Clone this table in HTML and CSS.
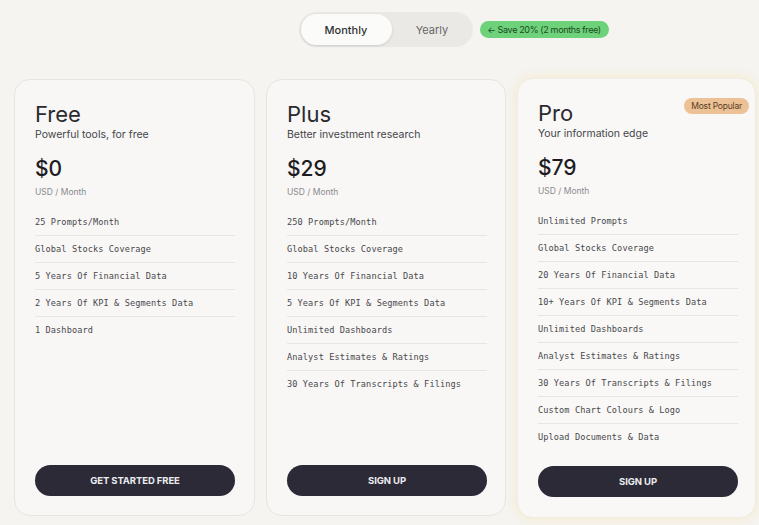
FILE: index.html
```html
<!DOCTYPE html>
<html>
<head>
<meta charset="utf-8">
<link rel="stylesheet" href="styles.css">
</head>
<body>
<div class="page">
  <div class="top">
    <div class="toggle-wrap">
      <div class="toggle">
        <span class="opt active">Monthly</span>
        <span class="opt">Yearly</span>
      </div>
      <span class="save">&#8592; Save 20% (2 months free)</span>
    </div>
  </div>
  <div class="cards">
    <div class="card">
      <h2 class="title">Free</h2>
      <p class="sub">Powerful tools, for free</p>
      <div class="price">$0</div>
      <div class="unit">USD / Month</div>
      <ul class="features">
        <li>25 Prompts/Month</li>
        <li>Global Stocks Coverage</li>
        <li>5 Years Of Financial Data</li>
        <li>2 Years Of KPI &amp; Segments Data</li>
        <li class="last">1 Dashboard</li>
      </ul>
      <button class="btn">GET STARTED FREE</button>
    </div>
    <div class="card">
      <h2 class="title">Plus</h2>
      <p class="sub">Better investment research</p>
      <div class="price">$29</div>
      <div class="unit">USD / Month</div>
      <ul class="features">
        <li>250 Prompts/Month</li>
        <li>Global Stocks Coverage</li>
        <li>10 Years Of Financial Data</li>
        <li>5 Years Of KPI &amp; Segments Data</li>
        <li>Unlimited Dashboards</li>
        <li>Analyst Estimates &amp; Ratings</li>
        <li class="last">30 Years Of Transcripts &amp; Filings</li>
      </ul>
      <button class="btn">SIGN UP</button>
    </div>
    <div class="card pro">
      <span class="popular">Most Popular</span>
      <h2 class="title">Pro</h2>
      <p class="sub">Your information edge</p>
      <div class="price">$79</div>
      <div class="unit">USD / Month</div>
      <ul class="features">
        <li>Unlimited Prompts</li>
        <li>Global Stocks Coverage</li>
        <li>20 Years Of Financial Data</li>
        <li>10+ Years Of KPI &amp; Segments Data</li>
        <li>Unlimited Dashboards</li>
        <li>Analyst Estimates &amp; Ratings</li>
        <li>30 Years Of Transcripts &amp; Filings</li>
        <li>Custom Chart Colours &amp; Logo</li>
        <li class="last">Upload Documents &amp; Data</li>
      </ul>
      <button class="btn">SIGN UP</button>
    </div>
  </div>
</div>
</body>
</html>
```
FILE: styles.css
```css
* { box-sizing: border-box; }
html, body { margin: 0; padding: 0; }
body {
  background: #f5f4f1;
  font-family: "Inter", "Open Sans", sans-serif;
  color: #222228;
  width: 759px;
  height: 525px;
  overflow: hidden;
}
.page {
  padding: 12px 2px 0 14px;
}
.top {
  display: flex;
  justify-content: center;
}
.toggle-wrap {
  position: relative;
}
.toggle {
  display: flex;
  width: 174px;
  height: 35px;
  padding: 2px;
  border-radius: 18px;
  background: #ebe9e6;
}
.opt {
  flex: 1;
  display: flex;
  align-items: center;
  justify-content: center;
  font-size: 11px;
  color: #666;
  border-radius: 16px;
}
.opt.active {
  flex: 0 0 91px;
  background: #fbfbfa;
  color: #333;
  font-weight: 500;
  box-shadow: 0 1px 3px rgba(0,0,0,0.12);
}
.opt:not(.active) { padding-left: 2px; }
.save {
  position: absolute;
  left: calc(100% + 7px);
  top: 9px;
  width: 129px;
  height: 17px;
  border-radius: 9px;
  background: #6ed27b;
  color: #1d4a22;
  font-size: 9px;
  letter-spacing: -0.35px;
  display: flex;
  align-items: center;
  justify-content: center;
  white-space: nowrap;
}
.cards {
  display: grid;
  grid-template-columns: 241px 240px 239px;
  gap: 11px;
  margin-top: 32px;
  align-items: start;
}
.card {
  position: relative;
  display: flex;
  flex-direction: column;
  height: 437px;
  padding: 21px 20px 19px;
  background: #f8f7f5;
  border: 1px solid #e7e5e1;
  border-radius: 16px;
}
.card.pro {
  margin-top: -1px;
  height: 440px;
  border-color: #efece6;
  box-shadow: 0 0 10px 2px rgba(248, 226, 170, 0.45);
  background: #f9f8f6;
}
.title {
  margin: 0;
  font-size: 22px;
  line-height: 26px;
  font-weight: 400;
  color: #2a2a30;
}
.sub {
  margin: 1px 0 0;
  font-size: 10.5px;
  line-height: 14px;
  color: #45454a;
}
.price {
  margin-top: 14px;
  font-size: 21px;
  line-height: 26px;
  font-weight: 500;
  color: #1c1c22;
}
.unit {
  margin-top: 4px;
  font-size: 8.5px;
  line-height: 12px;
  color: #8a8a8e;
}
.features {
  list-style: none;
  margin: 11px 0 0;
  padding: 0;
  width: 200px;
}
.features li {
  font-family: "DejaVu Sans Mono", "Liberation Mono", monospace;
  font-size: 8.6px;
  letter-spacing: 0.1px;
  line-height: 26px;
  height: 27px;
  color: #48484d;
  border-bottom: 1px solid #e8e6e2;
  white-space: nowrap;
}
.features li.last { border-bottom: none; }
.btn {
  margin-top: auto;
  width: 200px;
  height: 31px;
  border: none;
  border-radius: 16px;
  background: #2b2a36;
  color: #ececef;
  font-family: "Inter", "Open Sans", sans-serif;
  font-size: 9.5px;
  font-weight: 700;
  letter-spacing: -0.1px;
  cursor: pointer;
}
.pro .btn { margin-bottom: 1px; }
.popular {
  position: absolute;
  top: 19px;
  right: 6px;
  height: 16px;
  padding: 0 7px;
  border-radius: 8px;
  background: #ecc195;
  color: #5a3d25;
  font-size: 8.5px;
  line-height: 16px;
  letter-spacing: -0.2px;
}
```
